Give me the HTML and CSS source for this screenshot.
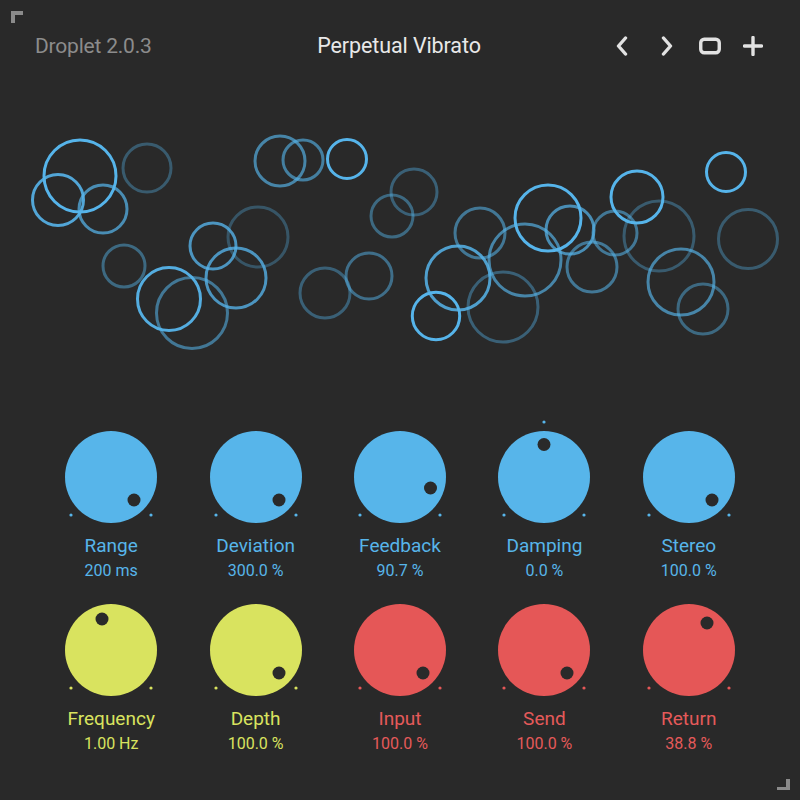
FILE: index.html
```html
<!DOCTYPE html>
<html>
<head>
<meta charset="utf-8">
<link rel="stylesheet" href="styles.css">
</head>
<body>
<div class="app">
  <div class="corner corner-tl"></div>
  <div class="corner corner-br"></div>

  <header class="header">
    <div class="brand">Droplet 2.0.3</div>
    <div class="title">Perpetual Vibrato</div>
    <div class="tools">
      <svg class="icon" width="12" height="20" viewBox="0 0 12 20"><path d="M9.5 2 L2.5 10 L9.5 18"/></svg>
      <svg class="icon" width="12" height="20" viewBox="0 0 12 20"><path d="M2.5 2 L9.5 10 L2.5 18"/></svg>
      <svg class="icon" width="24" height="20" viewBox="0 0 24 20"><rect x="2.75" y="3.25" width="18.5" height="13.5" rx="3.5"/></svg>
      <svg class="icon" width="20" height="20" viewBox="0 0 20 20"><path d="M10 1.5 V18.5 M1.5 10 H18.5"/></svg>
    </div>
  </header>

  <svg class="drops" width="800" height="270" viewBox="0 100 800 270">
    <circle class="o100" cx="80" cy="176" r="36"/>
    <circle class="o90" cx="58" cy="200" r="25.5"/>
    <circle class="o75" cx="103" cy="209" r="24"/>
    <circle class="o40" cx="147" cy="168" r="24"/>
    <circle class="o70" cx="280" cy="161" r="25"/>
    <circle class="o65" cx="303" cy="160" r="20"/>
    <circle class="o100" cx="347" cy="159" r="19.5"/>
    <circle class="o35" cx="258" cy="237" r="30"/>
    <circle class="o80" cx="213" cy="246" r="23"/>
    <circle class="o50" cx="124" cy="266" r="21"/>
    <circle class="o95" cx="169" cy="299" r="31.5"/>
    <circle class="o60" cx="192" cy="313" r="35.5"/>
    <circle class="o80" cx="236" cy="278" r="30"/>
    <circle class="o45" cx="325" cy="293" r="25"/>
    <circle class="o55" cx="369" cy="276" r="23"/>
    <circle class="o45" cx="414" cy="192" r="23"/>
    <circle class="o50" cx="392" cy="216" r="21"/>
    <circle class="o60" cx="480" cy="233" r="25"/>
    <circle class="o100" cx="548" cy="218" r="33"/>
    <circle class="o75" cx="570" cy="230" r="24"/>
    <circle class="o60" cx="615" cy="233" r="22"/>
    <circle class="o100" cx="637" cy="197" r="26"/>
    <circle class="o40" cx="659" cy="236" r="35"/>
    <circle class="o100" cx="726" cy="172" r="19.5"/>
    <circle class="o40" cx="748" cy="239" r="29.5"/>
    <circle class="o70" cx="525" cy="260" r="36"/>
    <circle class="o85" cx="458" cy="278" r="32"/>
    <circle class="o45" cx="503" cy="307" r="35"/>
    <circle class="o100" cx="436" cy="316" r="23.7"/>
    <circle class="o60" cx="592" cy="267" r="25"/>
    <circle class="o70" cx="681" cy="282" r="33"/>
    <circle class="o50" cx="703" cy="309" r="25"/>
  </svg>

  <section class="knobs">
    <div class="knob blue">
      <svg class="dial" width="120" height="120" viewBox="-60 -60 120 120">
        <circle class="face" r="46"/>
        <circle class="tick" cx="-40" cy="38" r="1.6"/><circle class="tick" cx="40" cy="38" r="1.6"/>
        <circle class="pointer" cx="23" cy="23" r="6.5"/>
      </svg>
      <div class="label">Range</div>
      <div class="value">200 ms</div>
    </div>
    <div class="knob blue">
      <svg class="dial" width="120" height="120" viewBox="-60 -60 120 120">
        <circle class="face" r="46"/>
        <circle class="tick" cx="-40" cy="38" r="1.6"/><circle class="tick" cx="40" cy="38" r="1.6"/>
        <circle class="pointer" cx="23" cy="23" r="6.5"/>
      </svg>
      <div class="label">Deviation</div>
      <div class="value">300.0 %</div>
    </div>
    <div class="knob blue">
      <svg class="dial" width="120" height="120" viewBox="-60 -60 120 120">
        <circle class="face" r="46"/>
        <circle class="tick" cx="-40" cy="38" r="1.6"/><circle class="tick" cx="40" cy="38" r="1.6"/>
        <circle class="pointer" cx="30.5" cy="11" r="6.5"/>
      </svg>
      <div class="label">Feedback</div>
      <div class="value">90.7 %</div>
    </div>
    <div class="knob blue">
      <svg class="dial" width="120" height="120" viewBox="-60 -60 120 120">
        <circle class="face" r="46"/>
        <circle class="tick" cx="-40" cy="38" r="1.6"/><circle class="tick" cx="40" cy="38" r="1.6"/>
        <circle class="tick" cx="0" cy="-55" r="1.6"/>
        <circle class="pointer" cx="0" cy="-32.5" r="6.5"/>
      </svg>
      <div class="label">Damping</div>
      <div class="value">0.0 %</div>
    </div>
    <div class="knob blue">
      <svg class="dial" width="120" height="120" viewBox="-60 -60 120 120">
        <circle class="face" r="46"/>
        <circle class="tick" cx="-40" cy="38" r="1.6"/><circle class="tick" cx="40" cy="38" r="1.6"/>
        <circle class="pointer" cx="23" cy="23" r="6.5"/>
      </svg>
      <div class="label">Stereo</div>
      <div class="value">100.0 %</div>
    </div>

    <div class="knob yellow">
      <svg class="dial" width="120" height="120" viewBox="-60 -60 120 120">
        <circle class="face" r="46"/>
        <circle class="tick" cx="-40" cy="38" r="1.6"/><circle class="tick" cx="40" cy="38" r="1.6"/>
        <circle class="pointer" cx="-9" cy="-31" r="6.5"/>
      </svg>
      <div class="label">Frequency</div>
      <div class="value">1.00 Hz</div>
    </div>
    <div class="knob yellow">
      <svg class="dial" width="120" height="120" viewBox="-60 -60 120 120">
        <circle class="face" r="46"/>
        <circle class="tick" cx="-40" cy="38" r="1.6"/><circle class="tick" cx="40" cy="38" r="1.6"/>
        <circle class="pointer" cx="23" cy="23" r="6.5"/>
      </svg>
      <div class="label">Depth</div>
      <div class="value">100.0 %</div>
    </div>
    <div class="knob red">
      <svg class="dial" width="120" height="120" viewBox="-60 -60 120 120">
        <circle class="face" r="46"/>
        <circle class="tick" cx="-40" cy="38" r="1.6"/><circle class="tick" cx="40" cy="38" r="1.6"/>
        <circle class="pointer" cx="23" cy="23" r="6.5"/>
      </svg>
      <div class="label">Input</div>
      <div class="value">100.0 %</div>
    </div>
    <div class="knob red">
      <svg class="dial" width="120" height="120" viewBox="-60 -60 120 120">
        <circle class="face" r="46"/>
        <circle class="tick" cx="-40" cy="38" r="1.6"/><circle class="tick" cx="40" cy="38" r="1.6"/>
        <circle class="pointer" cx="23" cy="23" r="6.5"/>
      </svg>
      <div class="label">Send</div>
      <div class="value">100.0 %</div>
    </div>
    <div class="knob red">
      <svg class="dial" width="120" height="120" viewBox="-60 -60 120 120">
        <circle class="face" r="46"/>
        <circle class="tick" cx="-40" cy="38" r="1.6"/><circle class="tick" cx="40" cy="38" r="1.6"/>
        <circle class="pointer" cx="18" cy="-27" r="6.5"/>
      </svg>
      <div class="label">Return</div>
      <div class="value">38.8 %</div>
    </div>
  </section>
</div>
</body>
</html>
```

FILE: styles.css
```css
* { box-sizing: border-box; }
html, body { margin: 0; padding: 0; background: #292929; }
body {
  font-family: Roboto, "Liberation Sans", sans-serif;
  width: 800px;
  height: 800px;
  overflow: hidden;
}
.app {
  position: relative;
  width: 800px;
  height: 800px;
  background: #292929;
}
.corner {
  position: absolute;
  width: 12px;
  height: 12px;
}
.corner-tl {
  left: 11px;
  top: 11px;
  border-left: 4px solid #8a8a8a;
  border-top: 4px solid #8a8a8a;
}
.corner-br {
  right: 10px;
  bottom: 10px;
  width: 13px;
  height: 11px;
  border-right: 4px solid #8a8a8a;
  border-bottom: 3px solid #8a8a8a;
}
.header {
  height: 100px;
  display: grid;
  grid-template-columns: 1fr auto 1fr;
  align-items: start;
  padding: 30px 37px 0 35px;
}
.brand {
  font-size: 21px;
  color: #8c8c8c;
  line-height: 32px;
  letter-spacing: -0.2px;
}
.title {
  font-size: 21.5px;
  color: #e8e8e8;
  line-height: 32px;
  letter-spacing: -0.1px;
}
.tools {
  justify-self: end;
  display: flex;
  align-items: center;
  margin-top: 6px;
}
.icon {
  display: block;
  fill: none;
  stroke: #e2e2e2;
  stroke-width: 3.4;
  stroke-linecap: round;
  stroke-linejoin: round;
}
.icon:nth-child(1) { margin-right: 33px; }
.icon:nth-child(2) { margin-right: 25px; }
.icon:nth-child(3) { margin-right: 21px; }
.drops {
  display: block;
}
.drops circle {
  fill: none;
  stroke: #56b4ea;
  stroke-width: 3;
}
.drops .o100 { stroke-opacity: 1; }
.drops .o95 { stroke-opacity: 0.95; }
.drops .o90 { stroke-opacity: 0.9; }
.drops .o85 { stroke-opacity: 0.85; }
.drops .o80 { stroke-opacity: 0.78; }
.drops .o75 { stroke-opacity: 0.72; }
.drops .o70 { stroke-opacity: 0.66; }
.drops .o65 { stroke-opacity: 0.62; }
.drops .o60 { stroke-opacity: 0.56; }
.drops .o55 { stroke-opacity: 0.5; }
.drops .o50 { stroke-opacity: 0.46; }
.drops .o45 { stroke-opacity: 0.4; }
.drops .o40 { stroke-opacity: 0.36; }
.drops .o35 { stroke-opacity: 0.32; }

.knobs {
  display: grid;
  grid-template-columns: repeat(5, 1fr);
  row-gap: 6px;
  padding: 47px 39px 0 39px;
}
.knob {
  display: flex;
  flex-direction: column;
  align-items: center;
}
.dial { display: block; }
.label {
  font-size: 19px;
  line-height: 22px;
  margin-top: -2px;
}
.value {
  font-size: 16px;
  line-height: 22px;
  margin-top: 3px;
  margin-bottom: 2px;
}
.pointer { fill: #2a2a2a; }
.blue .face, .blue .tick { fill: #57b5ea; }
.blue .label, .blue .value { color: #57b5ea; }
.yellow .face, .yellow .tick { fill: #d9e35f; }
.yellow .label, .yellow .value { color: #d9e35f; }
.red .face, .red .tick { fill: #e55757; }
.red .label, .red .value { color: #e55a5a; }
```
